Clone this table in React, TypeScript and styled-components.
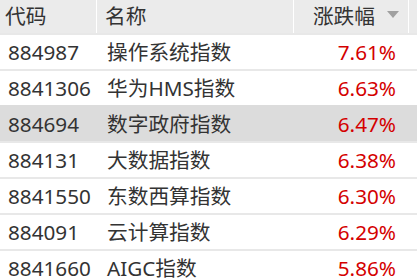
import React from "react";
import styled, { createGlobalStyle } from "styled-components";

const Global = createGlobalStyle`
  html, body { margin: 0; padding: 0; background: #ffffff; }
  body { font-family: "Noto Sans", "Noto Sans CJK SC", sans-serif; }
`;

const Table = styled.div`
  width: 417px;
  display: flex;
  flex-direction: column;
  font-size: 20.7px;
  color: #333333;
`;

const Header = styled.div`
  display: grid;
  grid-template-columns: 96px 1px 196px 1px 114px 1px 8px;
  height: 33px;
  background: #ebebeb;
  align-items: stretch;
`;

const HeadCell = styled.div<{ $align?: "left" | "right"; $pad?: number }>`
  display: flex;
  align-items: center;
  justify-content: ${(p) => (p.$align === "right" ? "flex-end" : "flex-start")};
  padding-left: ${(p) => (p.$align === "right" ? 0 : p.$pad ?? 5)}px;
  padding-right: ${(p) => (p.$align === "right" ? 9 : 0)}px;
  gap: 12px;
  line-height: 1;
  color: #333333;
`;

const Sep = styled.div`
  background: #ffffff;
`;

const Triangle = styled.span`
  width: 0;
  height: 0;
  border-left: 6px solid transparent;
  border-right: 6px solid transparent;
  border-top: 7px solid #a0a0a0;
  margin-bottom: 4px;
`;

const Row = styled.div<{ $hl?: boolean }>`
  display: grid;
  grid-template-columns: 96px 198px 102px;
  height: 34px;
  align-items: center;
  background: ${(p) => (p.$hl ? "#dcdcdc" : "#ffffff")};
  border-top: 2px solid ${(p) => (p.$hl ? "#dcdcdc" : "#e8e8e8")};
  line-height: 1;
`;

const Code = styled.div`
  padding-left: 8px;
`;

const Name = styled.div`
  padding-left: 11px;
`;

const Pct = styled.div`
  text-align: right;
  color: #d40000;
`;

const rows = [
  ["884987", "操作系统指数", "7.61%"],
  ["8841306", "华为HMS指数", "6.63%"],
  ["884694", "数字政府指数", "6.47%"],
  ["884131", "大数据指数", "6.38%"],
  ["8841550", "东数西算指数", "6.30%"],
  ["884091", "云计算指数", "6.29%"],
  ["8841660", "AIGC指数", "5.86%"],
];

export default function App() {
  return (
    <>
      <Global />
      <Table>
        <Header>
          <HeadCell>代码</HeadCell>
          <Sep />
          <HeadCell $pad={8}>名称</HeadCell>
          <Sep />
          <HeadCell $align="right">
            涨跌幅
            <Triangle />
          </HeadCell>
          <Sep />
          <div />
        </Header>
        {rows.map((r, i) => (
          <Row key={r[0]} $hl={i === 2}>
            <Code>{r[0]}</Code>
            <Name>{r[1]}</Name>
            <Pct>{r[2]}</Pct>
          </Row>
        ))}
      </Table>
    </>
  );
}
